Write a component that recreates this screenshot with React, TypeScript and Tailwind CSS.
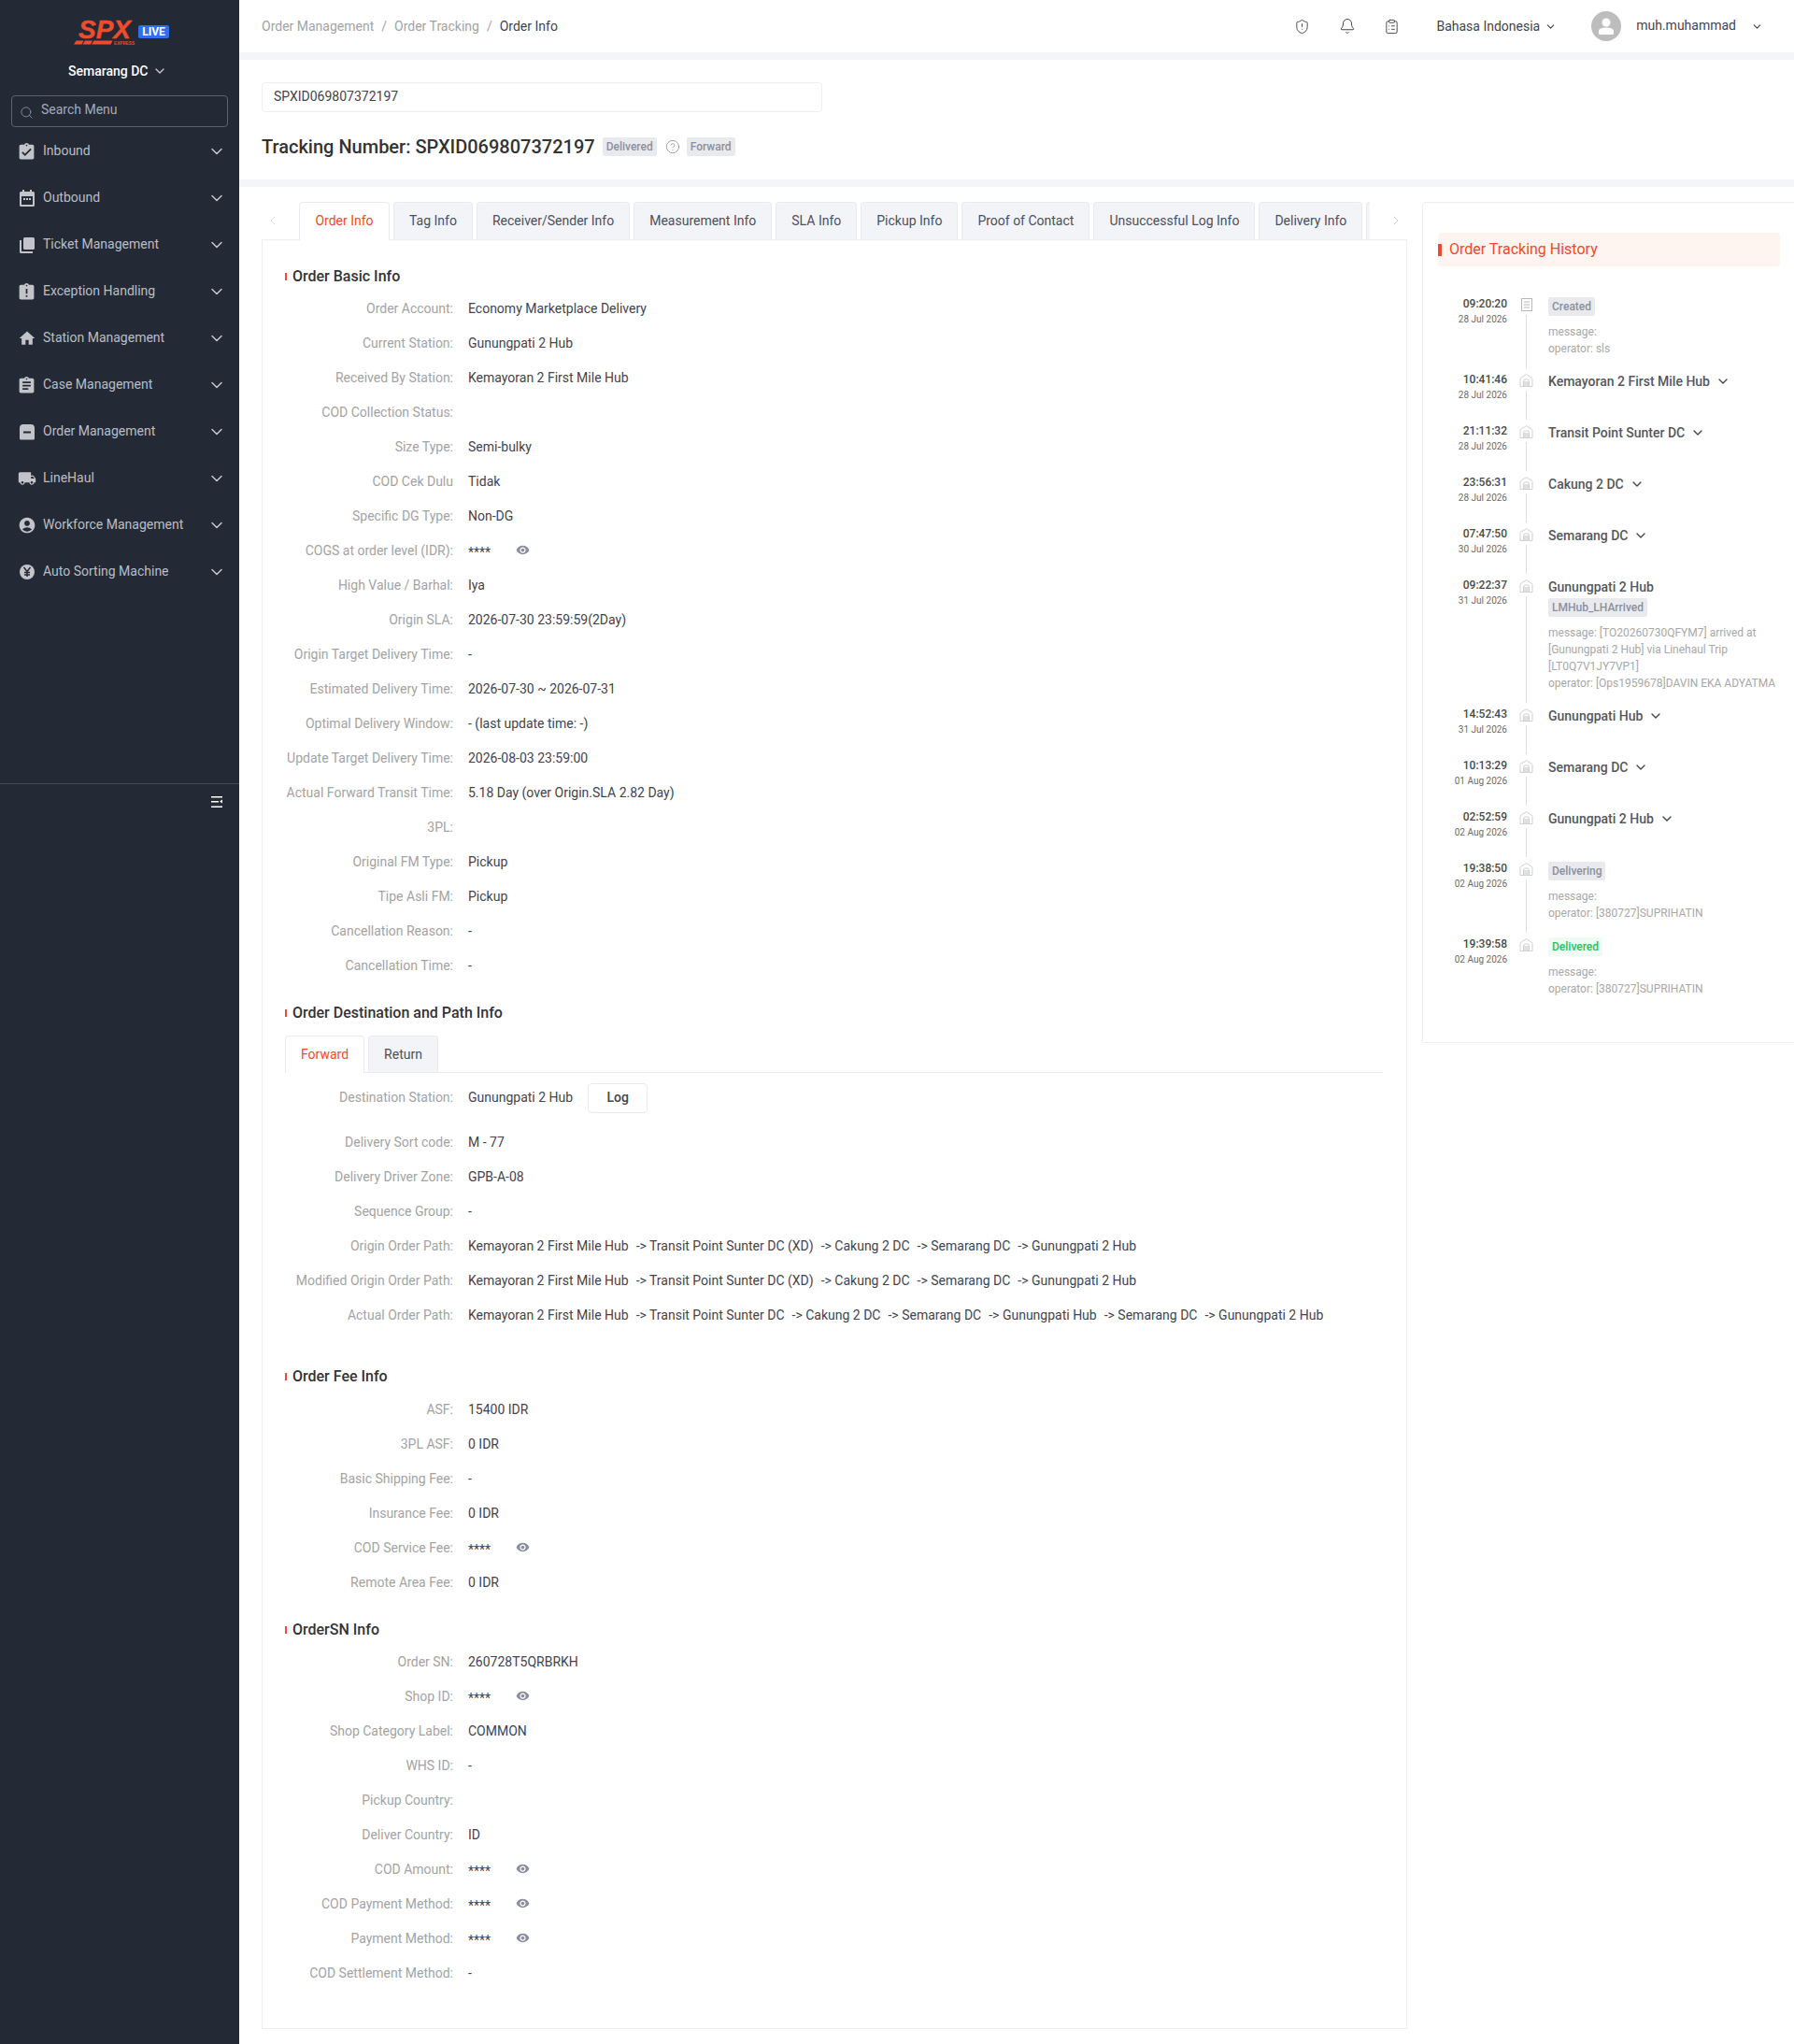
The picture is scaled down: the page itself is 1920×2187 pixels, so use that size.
import { Bell, ChevronDown, ChevronLeft, ChevronRight, CircleHelp, ClipboardList, Search, ShieldAlert } from 'lucide-react';
import {
  MdAccountCircle,
  MdAssignment,
  MdAssignmentLate,
  MdAssignmentTurnedIn,
  MdHome,
  MdLocalShipping,
  MdVisibility,
} from 'react-icons/md';
import type { ReactNode } from 'react';

function CalendarIcon() {
  return (
    <svg width="20" height="20" viewBox="0 0 20 20" fill="currentColor">
      <path d="M5 1h2v2h6V1h2v2h1.500A1.500 1.500 0 0 1 18 4.500V17.500A1.500 1.500 0 0 1 16.500 19h-13A1.500 1.500 0 0 1 2 17.500V4.500A1.500 1.500 0 0 1 3.500 3H5zM4 8v9h12V8z" />
      <rect x="6" y="10" width="2" height="2" />
      <rect x="9" y="10" width="2" height="2" />
      <rect x="12" y="10" width="2" height="2" />
    </svg>
  );
}

function StackIcon() {
  return (
    <svg width="20" height="20" viewBox="0 0 20 20" fill="currentColor">
      <rect x="6" y="2" width="12" height="13" rx="1.500" />
      <path d="M2 5h2v12h12v2H3.500A1.500 1.500 0 0 1 2 17.500z" />
    </svg>
  );
}

function BoxIcon() {
  return (
    <svg width="20" height="20" viewBox="0 0 20 20" fill="currentColor">
      <path fillRule="evenodd" d="M6 2h8a4 4 0 0 1 4 4v11a1.500 1.500 0 0 1-1.500 1.500h-13A1.500 1.500 0 0 1 2 17V6a4 4 0 0 1 4-4zm0 7.500v2h8v-2z" />
    </svg>
  );
}

function YenIcon() {
  return (
    <svg width="20" height="20" viewBox="0 0 20 20">
      <circle cx="10" cy="10" r="8" fill="currentColor" />
      <path d="M6.500 5 10 9.500 13.500 5M10 9.500V15M7 10.500h6M7 13h6" fill="none" stroke="#232a35" strokeWidth="1.500" />
    </svg>
  );
}

function CollapseIcon() {
  return (
    <svg width="14" height="14" viewBox="0 0 14 14" fill="#fff">
      <rect x="1" y="1" width="12" height="1.500" />
      <rect x="1" y="6" width="8" height="1.500" />
      <rect x="1" y="11.500" width="12" height="1.500" />
      <path d="M13 4.500v4l-3-2z" />
    </svg>
  );
}

function Logo() {
  return (
    <svg width="66" height="36" viewBox="0 -6 66 36" className="mt-[4px]">
      <text x="5" y="18" fontFamily="'Liberation Sans', sans-serif" fontSize="28" fontWeight="700" fontStyle="italic" fill="#ee4d2d" stroke="#ee4d2d" strokeWidth="0.4" textLength="56" lengthAdjust="spacingAndGlyphs">
        SPX
      </text>
      <path d="M2.500 20.500h8l-2 4H0zM12 20.500h8l-2 4H9.500zM21.500 20.500h20l-2 4H19z" fill="#ee4d2d" />
      <text x="43" y="24.500" fontFamily="'Liberation Sans', sans-serif" fontSize="4.500" fontWeight="700" fill="#ee4d2d" textLength="22">
        EXPRESS
      </text>
    </svg>
  );
}

const menuItems: { label: string; icon: ReactNode }[] = [
  { label: 'Inbound', icon: <MdAssignmentTurnedIn size={21} /> },
  { label: 'Outbound', icon: <CalendarIcon /> },
  { label: 'Ticket Management', icon: <StackIcon /> },
  { label: 'Exception Handling', icon: <MdAssignmentLate size={21} /> },
  { label: 'Station Management', icon: <MdHome size={20} /> },
  { label: 'Case Management', icon: <MdAssignment size={21} /> },
  { label: 'Order Management', icon: <BoxIcon /> },
  { label: 'LineHaul', icon: <MdLocalShipping size={20} /> },
  { label: 'Workforce Management', icon: <MdAccountCircle size={20} /> },
  { label: 'Auto Sorting Machine', icon: <YenIcon /> },
];

function Sidebar() {
  return (
    <div className="flex flex-col w-[256px] shrink-0 bg-[#232a35]">
      {/* logo */}
      <div className="flex items-center h-[64px] pl-[79px] pt-[1px]">
        <Logo />
        <span className="ml-[3px] mt-[2px] w-[33px] h-[14px] leading-[14px] text-center rounded-[2px] bg-[#2f6fed] text-white text-[12px] font-bold">LIVE</span>
      </div>
      <div className="flex items-center h-[24px] pl-[73px] text-white text-[14px] font-medium">
        Semarang DC
        <ChevronDown size={16} strokeWidth={2} className="ml-[5px] text-[#c5c9d0]" />
      </div>
      <div className="flex items-center h-[34px] mx-[12px] mt-[14px] pl-[8px] border border-[#5c6370] rounded-[4px] text-[#a4abb8] text-[14px] pb-[3px]">
        <Search size={15} strokeWidth={1.250} className="mt-[5px] text-[#9aa0aa]" />
        <span className="ml-[8px]">Search Menu</span>
      </div>
      {/* menu */}
      <div className="flex flex-col h-[703px] pt-[1px] border-b border-[#434a55]">
        {menuItems.map((item) => (
          <div key={item.label} className="flex items-center h-[50px] pl-[18px] pr-[14px] shrink-0 text-[#b9bec7] text-[14px]">
            <span className="flex justify-center w-[21px] text-[#c2c4c9]">{item.icon}</span>
            <span className="ml-[7px] flex-1 pb-[1px]">{item.label}</span>
            <ChevronDown size={20} strokeWidth={1.750} className="text-[#c5c9d0]" />
          </div>
        ))}
      </div>
      <div className="flex justify-end pr-[13px] pt-[12px] mr-[4px]">
        <CollapseIcon />
      </div>
    </div>
  );
}

function Header() {
  return (
    <div className="flex items-center h-[56px] pl-[24px] text-[14px] text-[#a3a3a3]">
      <span>Order Management</span>
      <span className="mx-[8px]">/</span>
      <span>Order Tracking</span>
      <span className="mx-[8px]">/</span>
      <span className="text-[#3f4450]">Order Info</span>
      <div className="flex items-center ml-auto text-[#3f4450]">
        <ShieldAlert size={17} strokeWidth={1.250} className="mr-[1px] text-[#33373f]" />
        <Bell size={18} strokeWidth={1.250} className="ml-[30px] text-[#33373f]" />
        <ClipboardList size={17} strokeWidth={1.250} className="ml-[30px] text-[#33373f]" />
        <span className="ml-[39px]">Bahasa Indonesia</span>
        <ChevronDown size={13} strokeWidth={2} className="ml-[5px]" />
        <div className="flex items-center justify-center ml-[37px] w-[32px] h-[32px] rounded-full bg-[#bdbdbd]">
          <svg width="16" height="18" viewBox="0 0 16 18" fill="#fff">
            <circle cx="8" cy="5" r="4.500" />
            <path d="M1.500 18h13a1.500 1.500 0 0 0 1.500-1.500V14c0-2-3.500-3.500-8-3.500S0 12 0 14v2.500A1.500 1.500 0 0 0 1.500 18z" />
          </svg>
        </div>
        <span className="ml-[16px] pb-[2px]">muh.muhammad</span>
        <ChevronDown size={13} strokeWidth={2} className="ml-[16px] mr-[33px]" />
      </div>
    </div>
  );
}

const mainTabs = [
  'Tag Info',
  'Receiver/Sender Info',
  'Measurement Info',
  'SLA Info',
  'Pickup Info',
  'Proof of Contact',
  'Unsuccessful Log Info',
  'Delivery Info',
];

function Tabs() {
  return (
    <div className="flex h-[40px]">
      <div className="flex items-center w-[40px] pl-[4px] text-[#d5d7dc]">
        <ChevronLeft size={16} strokeWidth={1.250} />
      </div>
      <div className="relative z-10 flex items-center justify-center w-[97px] h-[41px] pb-[1px] border border-b-0 border-[#e9ebf0] rounded-t-[4px] bg-white text-[14px] text-[#f04a2a]">
        Order Info
      </div>
      <div className="flex gap-[4px] ml-[4px] w-[1045px] overflow-hidden">
        {mainTabs.map((tab) => (
          <div key={tab} className="flex items-center h-[40px] px-[16px] shrink-0 border border-b-0 border-[#e9ebf0] rounded-t-[4px] bg-[#f3f4f8] text-[14px] text-[#4b505c]">
            {tab}
          </div>
        ))}
        <div className="h-[40px] w-[20px] shrink-0 border border-b-0 border-[#e9ebf0] rounded-t-[4px] bg-[#f3f4f8]" />
      </div>
      <div className="flex items-center pl-[20px] text-[#c4c6cb]">
        <ChevronRight size={16} strokeWidth={1.250} />
      </div>
    </div>
  );
}

function SectionTitle({ title, className }: { title: string; className: string }) {
  return (
    <div className={`flex items-center h-[24px] text-[16px] font-medium text-[#333] ${className}`}>
      <span className="w-[2px] h-[8px] mr-[6px] bg-[#ee4d2d]" />
      {title}
    </div>
  );
}

type RowData = { label: string; value?: string; masked?: boolean; path?: string[] };

function Row({ label, value, masked, path }: RowData) {
  return (
    <div className="flex items-center h-[37px] text-[14px]">
      <span className="w-[181px] pr-[1px] text-right text-[#a3a3a3] whitespace-nowrap">{label}</span>
      <span className="ml-[15px] flex items-center text-[#3f4450] whitespace-pre">
        {masked && (
          <>
            <span className="w-[26px] pt-[3px]">****</span>
            <MdVisibility size={15} className="ml-[25px] mb-[2px] text-[#8a8f9c]" />
          </>
        )}
        {value}
        {path &&
          path.map((stop, i) => (
            <span key={i} className={i === 0 ? '' : 'ml-[8px]'}>
              {i === 0 ? stop : `-> ${stop}`}
            </span>
          ))}
      </span>
    </div>
  );
}

const basicRows: RowData[] = [
  { label: 'Order Account:', value: 'Economy Marketplace Delivery' },
  { label: 'Current Station:', value: 'Gunungpati 2 Hub' },
  { label: 'Received By Station:', value: 'Kemayoran 2 First Mile Hub' },
  { label: 'COD Collection Status:' },
  { label: 'Size Type:', value: 'Semi-bulky' },
  { label: 'COD Cek Dulu', value: 'Tidak' },
  { label: 'Specific DG Type:', value: 'Non-DG' },
  { label: 'COGS at order level (IDR):', masked: true },
  { label: 'High Value / Barhal:', value: 'Iya' },
  { label: 'Origin SLA:', value: '2026-07-30 23:59:59(2Day)' },
  { label: 'Origin Target Delivery Time:', value: '-' },
  { label: 'Estimated Delivery Time:', value: '2026-07-30 ~ 2026-07-31' },
  { label: 'Optimal Delivery Window:', value: '- (last update time: -)' },
  { label: 'Update Target Delivery Time:', value: '2026-08-03 23:59:00' },
  { label: 'Actual Forward Transit Time:', value: '5.18 Day (over Origin.SLA 2.82 Day)' },
  { label: '3PL:' },
  { label: 'Original FM Type:', value: 'Pickup' },
  { label: 'Tipe Asli FM:', value: 'Pickup' },
  { label: 'Cancellation Reason:', value: '-' },
  { label: 'Cancellation Time:', value: '-' },
];

const originPath = ['Kemayoran 2 First Mile Hub', 'Transit Point Sunter DC (XD)', 'Cakung 2 DC', 'Semarang DC', 'Gunungpati 2 Hub'];

const pathRows: RowData[] = [
  { label: 'Delivery Sort code:', value: 'M - 77' },
  { label: 'Delivery Driver Zone:', value: 'GPB-A-08' },
  { label: 'Sequence Group:', value: '-' },
  { label: 'Origin Order Path:', path: originPath },
  { label: 'Modified Origin Order Path:', path: originPath },
  {
    label: 'Actual Order Path:',
    path: ['Kemayoran 2 First Mile Hub', 'Transit Point Sunter DC', 'Cakung 2 DC', 'Semarang DC', 'Gunungpati Hub', 'Semarang DC', 'Gunungpati 2 Hub'],
  },
];

const feeRows: RowData[] = [
  { label: 'ASF:', value: '15400 IDR' },
  { label: '3PL ASF:', value: '0 IDR' },
  { label: 'Basic Shipping Fee:', value: '-' },
  { label: 'Insurance Fee:', value: '0 IDR' },
  { label: 'COD Service Fee:', masked: true },
  { label: 'Remote Area Fee:', value: '0 IDR' },
];

const snRows: RowData[] = [
  { label: 'Order SN:', value: '260728T5QRBRKH' },
  { label: 'Shop ID:', masked: true },
  { label: 'Shop Category Label:', value: 'COMMON' },
  { label: 'WHS ID:', value: '-' },
  { label: 'Pickup Country:' },
  { label: 'Deliver Country:', value: 'ID' },
  { label: 'COD Amount:', masked: true },
  { label: 'COD Payment Method:', masked: true },
  { label: 'Payment Method:', masked: true },
  { label: 'COD Settlement Method:', value: '-' },
];

function OrderPanel() {
  return (
    <div className="border border-[#eceef2] pl-[24px] pt-[27px] pb-[40px] pr-[25px]">
      <SectionTitle title="Order Basic Info" className="mb-[4px]" />
      {basicRows.map((r) => (
        <Row key={r.label} {...r} />
      ))}

      <SectionTitle title="Order Destination and Path Info" className="mt-[20px] mb-[12px]" />
      {/* forward / return */}
      <div className="flex gap-[4px] h-[40px] border-b border-[#e9ebf0]">
        <div className="flex items-center justify-center w-[85px] h-[40px] border border-b-0 border-[#e9ebf0] rounded-t-[4px] bg-white text-[14px] text-[#f04a2a]">Forward</div>
        <div className="flex items-center justify-center w-[75px] h-[39px] border border-b-0 border-[#e9ebf0] rounded-t-[4px] bg-[#f3f4f8] text-[14px] text-[#4b505c]">Return</div>
      </div>
      <div className="flex items-center h-[37px] mt-[8px] mb-[11px] text-[14px]">
        <span className="w-[181px] pr-[1px] text-right text-[#a3a3a3]">Destination Station:</span>
        <span className="ml-[15px] text-[#3f4450]">Gunungpati 2 Hub</span>
        <span className="flex items-center justify-center ml-[16px] w-[64px] h-[32px] border border-[#e9ebf0] rounded-[4px] font-medium text-[#3f4450]">Log</span>
      </div>
      {pathRows.map((r) => (
        <Row key={r.label} {...r} />
      ))}

      <SectionTitle title="Order Fee Info" className="mt-[35px] mb-[5px]" />
      {feeRows.map((r) => (
        <Row key={r.label} {...r} />
      ))}

      <SectionTitle title="OrderSN Info" className="mt-[20px] mb-[4px]" />
      {snRows.map((r) => (
        <Row key={r.label} {...r} />
      ))}
    </div>
  );
}

function DocIcon() {
  return (
    <svg width="14" height="14" viewBox="0 0 14 14" fill="none" stroke="#b5b8bd" strokeWidth="1">
      <rect x="1.500" y="0.500" width="11" height="13" />
      <path d="M4 4h6M4 7h6M4 10h6" />
    </svg>
  );
}

function HubIcon() {
  return (
    <svg width="15" height="14" viewBox="0 0 15 14" fill="none" stroke="#cfd1d4" strokeWidth="1">
      <path d="M1 13.500V5.500Q1 4.500 2 4L7.500 0.700 13 4Q14 4.500 14 5.500V13.500z" />
      <path d="M4.500 13.500V8L5.500 6h4l1 2V13.500" />
      <path d="M4.500 10.500h6" />
      <path d="M5 8h5v5H5z" fill="#dee0e3" stroke="none" />
    </svg>
  );
}

type HistoryItem = {
  time: string;
  date: string;
  station?: string;
  tag?: string;
  message?: string;
  operator?: string;
  chevron?: boolean;
  green?: boolean;
  doc?: boolean;
};

const history: HistoryItem[] = [
  { time: '09:20:20', date: '28 Jul 2026', tag: 'Created', message: 'message:', operator: 'operator: sls', doc: true },
  { time: '10:41:46', date: '28 Jul 2026', station: 'Kemayoran 2 First Mile Hub', chevron: true },
  { time: '21:11:32', date: '28 Jul 2026', station: 'Transit Point Sunter DC', chevron: true },
  { time: '23:56:31', date: '28 Jul 2026', station: 'Cakung 2 DC', chevron: true },
  { time: '07:47:50', date: '30 Jul 2026', station: 'Semarang DC', chevron: true },
  {
    time: '09:22:37',
    date: '31 Jul 2026',
    station: 'Gunungpati 2 Hub',
    tag: 'LMHub_LHArrived',
    message: 'message: [TO20260730QFYM7] arrived at [Gunungpati 2 Hub] via Linehaul Trip [LT0Q7V1JY7VP1]',
    operator: 'operator: [Ops1959678]DAVIN EKA ADYATMA',
  },
  { time: '14:52:43', date: '31 Jul 2026', station: 'Gunungpati Hub', chevron: true },
  { time: '10:13:29', date: '01 Aug 2026', station: 'Semarang DC', chevron: true },
  { time: '02:52:59', date: '02 Aug 2026', station: 'Gunungpati 2 Hub', chevron: true },
  { time: '19:38:50', date: '02 Aug 2026', tag: 'Delivering', message: 'message:', operator: 'operator: [380727]SUPRIHATIN' },
  { time: '19:39:58', date: '02 Aug 2026', tag: 'Delivered', message: 'message:', operator: 'operator: [380727]SUPRIHATIN', green: true },
];

function HistoryRow({ item, last }: { item: HistoryItem; last: boolean }) {
  return (
    <div className="flex">
      <div className="w-[74px] shrink-0 pt-[1px] text-right">
        <div className="h-[18px] leading-[18px] text-[12px] font-medium text-[#4a4a4a]">{item.time}</div>
        <div className="h-[16px] leading-[16px] text-[10px] text-[#6b6b6b]">{item.date}</div>
      </div>
      <div className="flex flex-col items-center w-[41px] mr-[3px] shrink-0 pt-[4px]">
        {item.doc ? <DocIcon /> : <HubIcon />}
        {!last && <div className="flex-1 w-px mt-[4px] mb-[2px] bg-[#dcdee1]" />}
      </div>
      <div className={`w-[250px] shrink-0 ${last ? 'pb-[48px]' : item.tag ? 'pb-[14px]' : 'pb-[31px]'} ${item.station ? '' : 'pt-[3px]'}`}>
        {item.station && (
          <div className="flex items-center h-[24px] text-[14px] font-medium text-[#55575c]">
            {item.station}
            {item.chevron && <ChevronDown size={16} strokeWidth={2} className="ml-[6px] text-[#3f4450]" />}
          </div>
        )}
        {item.tag && (
          <span className={`flex items-center w-fit h-[20px] px-[4px] rounded-[2px] text-[12px] ${item.green ? 'bg-[#effbf3] text-[#22c55e] font-medium' : 'bg-[#e9eaed] text-[#8a90a0] font-medium'}`}>
            {item.tag}
          </span>
        )}
        {item.tag && (
          <div className="mt-[8px] text-[12px] leading-[18px] text-[#a8a8a8]">
            <div>{item.message}</div>
            <div className="whitespace-nowrap">{item.operator}</div>
          </div>
        )}
      </div>
    </div>
  );
}

function HistoryPanel() {
  return (
    <div className="w-[500px] shrink-0 h-fit border border-[#eceef2] rounded-tl-[4px] pl-[16px] pt-[32px]">
      <div className="flex items-center w-[366px] h-[36px] mb-[30px] rounded-[4px] bg-[#fef4f0] text-[16px] text-[#f04a2a]">
        <span className="w-[4px] h-[13px] mr-[8px] bg-[#ee4d2d]" />
        Order Tracking History
      </div>
      {history.map((item, i) => (
        <HistoryRow key={item.time} item={item} last={i === history.length - 1} />
      ))}
    </div>
  );
}

function App() {
  return (
    <div className="flex w-[1920px] h-[2187px] overflow-hidden bg-white font-['Roboto',sans-serif]">
      <Sidebar />
      <div className="flex-1 min-w-0 flex flex-col bg-[#f4f5f9]">
        <div className="bg-white">
          <Header />
        </div>
        <div className="mt-[8px] h-[128px] pl-[24px] pt-[24px] bg-white">
          <div className="flex items-center w-[600px] h-[32px] px-[12px] pb-[1px] border border-[#eceef2] rounded-[4px] text-[14px] text-[#3f4450]">SPXID069807372197</div>
          <div className="flex items-center mt-[21px] h-[32px]">
            <span className="text-[20px] font-medium text-[#333]">Tracking Number: SPXID069807372197</span>
            <span className="flex items-center ml-[8px] h-[20px] px-[4px] rounded-[2px] bg-[#e9eaed] text-[12px] font-medium text-[#8a90a0]">Delivered</span>
            <CircleHelp size={16} strokeWidth={1} className="ml-[9px] text-[#70757f]" />
            <span className="flex items-center ml-[7px] h-[20px] px-[4px] rounded-[2px] bg-[#e9eaed] text-[12px] font-medium text-[#8a90a0]">Forward</span>
          </div>
        </div>
        <div className="mt-[8px] flex-1 flex gap-[16px] pl-[24px] pt-[16px] bg-white overflow-hidden">
          <div className="w-[1226px] shrink-0">
            <Tabs />
            <OrderPanel />
          </div>
          <HistoryPanel />
        </div>
      </div>
    </div>
  );
}

export default App;
